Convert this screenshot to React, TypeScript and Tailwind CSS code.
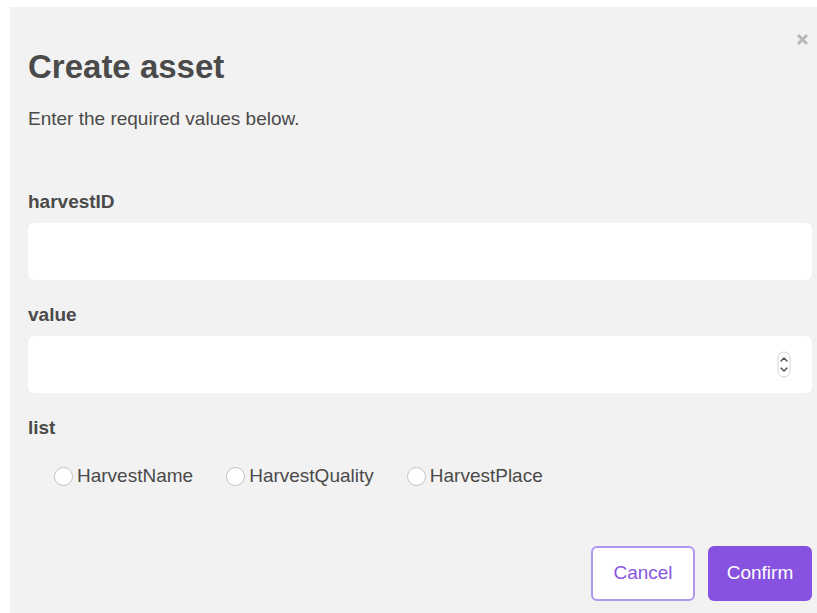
import React from "react";

const font = { fontFamily: '"Liberation Sans", Arial, Helvetica, sans-serif' };

function CloseIcon() {
  return (
    <svg width="13" height="13" viewBox="0 0 13 13" className="block">
      <path d="M2 2 L11 11 M11 2 L2 11" stroke="#b8b8b8" strokeWidth="3" strokeLinecap="butt" />
    </svg>
  );
}

function Spinner() {
  return (
    <svg width="14" height="27" viewBox="0 0 14 27" className="block">
      <rect x="1" y="1" width="12" height="25" rx="6" fill="#ffffff" stroke="#d4d4d4" strokeWidth="1" />
      <path d="M4 10 L7 7 L10 10" fill="none" stroke="#555" strokeWidth="1.5" strokeLinecap="round" strokeLinejoin="round" />
      <path d="M4 17 L7 20 L10 17" fill="none" stroke="#555" strokeWidth="1.5" strokeLinecap="round" strokeLinejoin="round" />
    </svg>
  );
}

function Radio({ label }: { label: string }) {
  return (
    <label className="flex items-center">
      <span className="w-[19px] h-[19px] rounded-full bg-white border border-[#c4c4c4] mr-[4px]" />
      <span className="text-[19px] leading-[22px] text-[#4a4a4a]">{label}</span>
    </label>
  );
}

export default function App() {
  return (
    <div className="w-[817px] h-[613px] bg-white pl-[10px] pt-[7px] overflow-hidden" style={font}>
      <div className="relative w-[807px] h-[606px] bg-[#f2f2f2] pl-[18px] pr-[5px] pt-[41px]">
        <button className="absolute top-[26px] right-[8px]">
          <CloseIcon />
        </button>

        <h1 className="text-[33px] leading-[38px] font-bold text-[#4a4a4a]">Create asset</h1>
        <p className="mt-[22px] text-[19px] leading-[22px] text-[#4a4a4a]">Enter the required values below.</p>

        <div className="mt-[61px] text-[19px] leading-[22px] font-bold text-[#4a4a4a]">harvestID</div>
        <div className="mt-[10px] h-[57px] rounded-[6px] bg-white" />

        <div className="mt-[24px] text-[19px] leading-[22px] font-bold text-[#4a4a4a]">value</div>
        <div className="mt-[10px] h-[57px] rounded-[6px] bg-white flex items-center justify-end pr-[21px]">
          <Spinner />
        </div>

        <div className="mt-[24px] text-[19px] leading-[22px] font-bold text-[#4a4a4a]">list</div>
        <div className="mt-[26px] pl-[26px] flex items-center gap-[33px]">
          <Radio label="HarvestName" />
          <Radio label="HarvestQuality" />
          <Radio label="HarvestPlace" />
        </div>

        <div className="mt-[59px] flex justify-end gap-[13px]">
          <button className="w-[104px] h-[55px] rounded-[6px] bg-white border-2 border-[#b197f2] text-[19px] text-[#8a55e0]">
            Cancel
          </button>
          <button className="w-[104px] h-[55px] rounded-[6px] bg-[#8752e0] text-[19px] text-white">
            Confirm
          </button>
        </div>
      </div>
    </div>
  );
}
